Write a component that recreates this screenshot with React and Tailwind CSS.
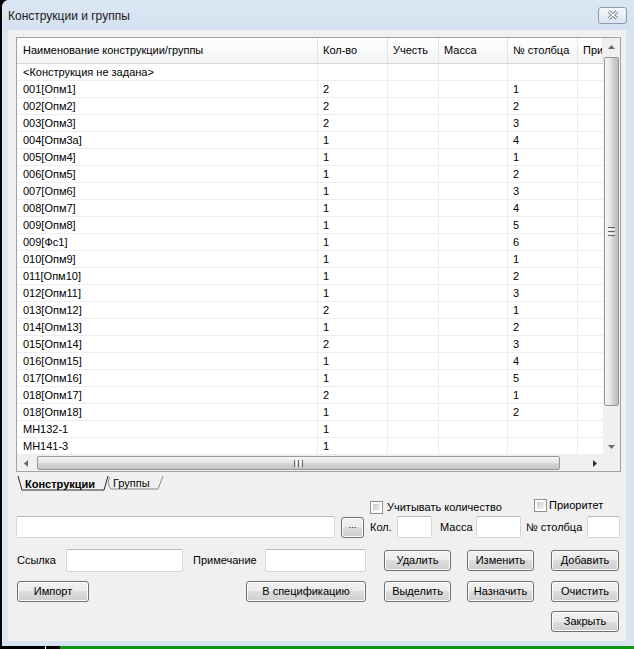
import React from "react";

const rows = [
  ["<Конструкция не задана>", "", ""],
  ["001[Опм1]", "2", "1"],
  ["002[Опм2]", "2", "2"],
  ["003[Опм3]", "2", "3"],
  ["004[Опм3а]", "1", "4"],
  ["005[Опм4]", "1", "1"],
  ["006[Опм5]", "1", "2"],
  ["007[Опм6]", "1", "3"],
  ["008[Опм7]", "1", "4"],
  ["009[Опм8]", "1", "5"],
  ["009[Фс1]", "1", "6"],
  ["010[Опм9]", "1", "1"],
  ["011[Опм10]", "1", "2"],
  ["012[Опм11]", "1", "3"],
  ["013[Опм12]", "2", "1"],
  ["014[Опм13]", "1", "2"],
  ["015[Опм14]", "2", "3"],
  ["016[Опм15]", "1", "4"],
  ["017[Опм16]", "1", "5"],
  ["018[Опм17]", "2", "1"],
  ["018[Опм18]", "1", "2"],
  ["МН132-1", "1", ""],
  ["МН141-3", "1", ""],
];

const cols = [
  { text: "Наименование конструкции/группы", w: "w-[301px] pl-[6px]" },
  { text: "Кол-во", w: "w-[70px] pl-[5px]" },
  { text: "Учесть", w: "w-[51px] pl-[5px]" },
  { text: "Масса", w: "w-[69px] pl-[5px]" },
  { text: "№ столбца", w: "w-[70px] pl-[5px]" },
  { text: "При", w: "w-[25px] pl-[5px]" },
];

function Button({ w, children }) {
  return (
    <div
      className={`${w} h-[21px] shrink-0 flex items-center justify-center rounded-[3px] border border-[#707070] shadow-[inset_0_0_0_1px_#fbfbfb] bg-[linear-gradient(#f2f2f2,#ebebeb_50%,#dddddd_50%,#cfcfcf)]`}
    >
      {children}
    </div>
  );
}

function Input({ w, h = "h-[22px]" }) {
  return <div className={`${w} ${h} shrink-0 bg-white rounded-[2px] border border-[#d3d6dc] border-t-[#b5b8bf]`} />;
}

function Checkbox() {
  return (
    <div className="w-[13px] h-[13px] shrink-0 border border-[#8e8f8f] bg-white p-[2px]">
      <div className="w-full h-full bg-[linear-gradient(135deg,#c5c9cf,#f3f3f3)]" />
    </div>
  );
}

function Arrow({ dir }) {
  const d = {
    up: "M0 4 L3.5 0 L7 4 Z",
    down: "M0 0 L7 0 L3.5 4 Z",
    left: "M4 0 L4 7 L0 3.5 Z",
    right: "M0 0 L4 3.5 L0 7 Z",
  }[dir];
  const vert = dir === "up" || dir === "down";
  return (
    <svg width={vert ? 7 : 4} height={vert ? 4 : 7}>
      <path d={d} fill={dir === "right" ? "#303030" : "#6a6a6a"} />
    </svg>
  );
}

function Table() {
  return (
    <div className="ml-[8px] mt-[7px] w-[605px] h-[435px] border border-[#9da3ab] bg-white flex flex-col">
      <div className="flex h-[417px]">
        <div className="w-[586px] overflow-hidden">
          <div className="flex h-[26px] border-b border-[#d5d5d5] bg-[linear-gradient(#ffffff,#f3f4f6)]">
            {cols.map((c, i) => (
              <div key={i} className={`${c.w} shrink-0 flex items-center border-r border-[#e3e4e6] whitespace-nowrap overflow-hidden`}>
                {c.text}
              </div>
            ))}
          </div>
          {rows.map((r, i) => (
            <div key={i} className="flex h-[17px] border-b border-[#ededed]">
              <div className={`${cols[0].w} shrink-0 flex items-center border-r border-[#ededed] whitespace-nowrap`}>{r[0]}</div>
              <div className={`${cols[1].w} shrink-0 flex items-center border-r border-[#ededed]`}>{r[1]}</div>
              <div className={`${cols[2].w} shrink-0 border-r border-[#ededed]`} />
              <div className={`${cols[3].w} shrink-0 border-r border-[#ededed]`} />
              <div className={`${cols[4].w} shrink-0 flex items-center border-r border-[#ededed]`}>{r[2]}</div>
              <div className={`${cols[5].w} shrink-0`} />
            </div>
          ))}
        </div>
        {/* vertical scrollbar */}
        <div className="w-[17px] flex flex-col bg-[#f0f0f0]">
          <div className="h-[17px] flex items-center justify-center">
            <Arrow dir="up" />
          </div>
          <div className="mt-[2px] mx-[1px] h-[349px] rounded-[2px] border border-[#979797] bg-[linear-gradient(to_right,#f4f4f4,#e6e6e6_45%,#d4d4d4_55%,#bdbdbd)] flex items-center justify-center">
            <div className="flex flex-col gap-[1px]">
              <div className="w-[7px] h-[1px] bg-[#666]" />
              <div className="w-[7px] h-[1px] bg-[#fafafa]" />
              <div className="w-[7px] h-[1px] bg-[#666]" />
              <div className="w-[7px] h-[1px] bg-[#fafafa]" />
              <div className="w-[7px] h-[1px] bg-[#666]" />
            </div>
          </div>
          <div className="flex-1" />
          <div className="h-[17px] flex items-center justify-center">
            <Arrow dir="down" />
          </div>
        </div>
      </div>
      {/* horizontal scrollbar */}
      <div className="flex h-[16px] bg-[#f0f0f0]">
        <div className="w-[17px] flex items-center justify-center">
          <Arrow dir="left" />
        </div>
        <div className="ml-[3px] my-[1px] w-[523px] rounded-[2px] border border-[#979797] bg-[linear-gradient(#f4f4f4,#e6e6e6_45%,#d4d4d4_55%,#c4c4c4)] flex items-center justify-center">
          <div className="flex gap-[1px] h-[7px]">
            <div className="w-[1px] bg-[#666]" />
            <div className="w-[1px] bg-[#fafafa]" />
            <div className="w-[1px] bg-[#666]" />
            <div className="w-[1px] bg-[#fafafa]" />
            <div className="w-[1px] bg-[#666]" />
          </div>
        </div>
        <div className="flex-1" />
        <div className="w-[17px] flex items-center justify-center">
          <Arrow dir="right" />
        </div>
        <div className="w-[17px] bg-[#f0f0f0]" />
      </div>
    </div>
  );
}

function Tabs() {
  return (
    <div className="relative h-[21px] w-[170px] flex items-center">
      <svg className="absolute left-0 top-0" width="170" height="21">
        <path d="M102 5 Q98 11 103 17 L150 17 L155 4" fill="none" stroke="#8a8a8a" strokeWidth="1" />
        <path d="M10 4 L14 18 L96 18 L100 4" fill="#f0f0f0" stroke="#2a2a2a" strokeWidth="1" />
      </svg>
      <span className="relative ml-[17px] w-[88px] font-bold pt-[3px]">Конструкции</span>
      <span className="relative pt-[2px]">Группы</span>
    </div>
  );
}

export default function App() {
  return (
    <div className="w-[634px] h-[649px] bg-black overflow-hidden font-['Liberation_Sans',Arial,sans-serif] text-[11px] leading-none text-black">
      <div className="ml-[2px] w-[632px] h-[646px] rounded-tl-[7px] bg-[#d9e4f1] flex flex-col">
        {/* title bar */}
        <div className="h-[30px] flex items-center justify-between pl-[6px] pr-[7px] bg-[linear-gradient(#dbe6f3,#d6e2f0)] rounded-tl-[7px]">
          <span className="text-[12px] text-[#1a1a1a] pt-[2px]">Конструкции и группы</span>
          <div className="w-[29px] h-[17px] rounded-[3px] border border-[#8a9bb0] bg-[linear-gradient(#f3f7fb,#dbe4ef)] flex items-center justify-center">
            <svg width="12" height="10">
              <path d="M2 1.5 L10 8.5 M10 1.5 L2 8.5" stroke="#6b7a8c" strokeWidth="3.2" />
              <path d="M2 1.5 L10 8.5 M10 1.5 L2 8.5" stroke="#ffffff" strokeWidth="1.5" />
            </svg>
          </div>
        </div>

        {/* client */}
        <div className="ml-[6px] w-[618px] h-[611px] bg-[#f0f0f0] flex flex-col">
          <Table />
          <Tabs />

          <div className="mt-[5px] h-[18px] flex items-start">
            <div className="ml-[362px] w-[164px] mt-[3px] flex items-center">
              <Checkbox />
              <span className="ml-[4px]">Учитывать количество</span>
            </div>
            <div className="mt-[1px] flex items-center">
              <Checkbox />
              <span className="ml-[2px]">Приоритет</span>
            </div>
          </div>

          <div className="h-[22px] flex items-center">
            <div className="ml-[8px]">
              <Input w="w-[319px]" />
            </div>
            <div className="ml-[6px]">
              <Button w="w-[23px]">
                <span className="text-[9px] -mt-[3px]">...</span>
              </Button>
            </div>
            <span className="ml-[6px] w-[27px]">Кол.</span>
            <Input w="w-[35px]" />
            <span className="ml-[6px] w-[38px] pl-[2px]">Масса</span>
            <Input w="w-[45px]" />
            <span className="ml-[5px] w-[61px]">№ столбца</span>
            <Input w="w-[33px]" />
          </div>

          <div className="mt-[11px] h-[23px] flex items-center">
            <span className="ml-[9px] w-[49px]">Ссылка</span>
            <Input w="w-[117px]" h="h-[23px]" />
            <span className="ml-[10px] w-[72px]">Примечание</span>
            <Input w="w-[101px]" h="h-[23px]" />
            <div className="ml-[18px]">
              <Button w="w-[67px]">Удалить</Button>
            </div>
            <div className="ml-[16px]">
              <Button w="w-[67px]">Изменить</Button>
            </div>
            <div className="ml-[17px]">
              <Button w="w-[68px]">Добавить</Button>
            </div>
          </div>

          <div className="mt-[9px] h-[21px] flex items-center">
            <div className="ml-[9px]">
              <Button w="w-[72px]">Импорт</Button>
            </div>
            <div className="ml-[157px]">
              <Button w="w-[120px]">В спецификацию</Button>
            </div>
            <div className="ml-[18px]">
              <Button w="w-[67px]">Выделить</Button>
            </div>
            <div className="ml-[16px]">
              <Button w="w-[67px]">Назначить</Button>
            </div>
            <div className="ml-[17px]">
              <Button w="w-[68px]">Очистить</Button>
            </div>
          </div>

          <div className="mt-[9px] h-[21px] flex items-center">
            <div className="ml-[543px]">
              <Button w="w-[68px]">Закрыть</Button>
            </div>
          </div>
        </div>
      </div>
      <div className="flex h-[3px]">
        <div className="w-[45px]" />
        <div className="w-[1px] bg-white" />
        <div className="w-[14px]" />
        <div className="flex-1 bg-[#139413]" />
      </div>
    </div>
  );
}
